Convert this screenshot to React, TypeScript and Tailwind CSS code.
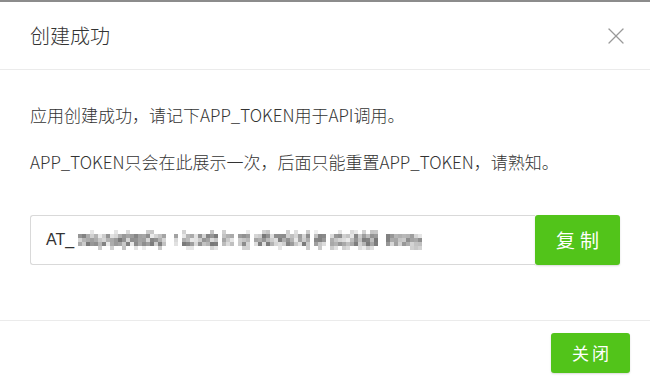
import { X } from 'lucide-react';

// deterministic mosaic for the masked token
function rand(seed: number) {
  let s = seed;
  return () => {
    s = (s * 16807) % 2147483647;
    return s / 2147483647;
  };
}

function Mosaic() {
  const r = rand(42);
  const cols = 87;
  const rows = 5;
  const cells: { x: number; y: number; c: string }[] = [];
  for (let i = 0; i < cols; i++) {
    const gap = r() < 0.12;
    for (let j = 0; j < rows; j++) {
      const edge = j === 0 || j === rows - 1;
      const p = r();
      if (gap || (edge && p < 0.7)) continue;
      const v = edge ? 195 + Math.floor(r() * 45) : 120 + Math.floor(r() * 115);
      cells.push({ x: i * 4, y: j * 4, c: `rgb(${v},${v},${v})` });
    }
  }
  return (
    <svg width={cols * 4} height={rows * 4} className="shrink-0">
      {cells.map((c, k) => (
        <rect key={k} x={c.x} y={c.y} width={4} height={4} fill={c.c} />
      ))}
    </svg>
  );
}

export default function App() {
  return (
    <div className="w-[650px] h-[385px] bg-white border-t-[2px] border-[#8c8c8c] flex flex-col text-[#333] font-['Noto_Sans_CJK_SC','Microsoft_YaHei',sans-serif]">
      <div className="h-[68px] shrink-0 flex items-center justify-between pl-[30px] pr-[20px] border-b border-[#ebebeb]">
        <span className="text-[20px] font-light">创建成功</span>
        <X className="h-[28px] w-[28px] text-[#999]" strokeWidth={1.1} />
      </div>

      <div className="px-[30px] pt-[34px] h-[250px] shrink-0 font-light">
        <p className="text-[17px] leading-[22px]">应用创建成功，请记下APP_TOKEN用于API调用。</p>
        <p className="text-[17px] leading-[22px] mt-[25px]">APP_TOKEN只会在此展示一次，后面只能重置APP_TOKEN，请熟知。</p>
        <div className="mt-[42px] flex items-stretch h-[50px]">
          <div className="flex-1 flex items-center border border-[#d9d9d9] border-r-0 rounded-l-[3px] pl-[15px] text-[16px] font-normal font-['Liberation_Sans',sans-serif] text-[#333]">
            <span>AT_</span>
            <Mosaic />
          </div>
          <button className="w-[85px] bg-[#52c41a] text-white text-[19px] font-normal tracking-[5px] pl-[5px] rounded-[3px] shadow-[0_1px_2px_rgba(0,0,0,0.15)]">
            复制
          </button>
        </div>
      </div>

      <div className="flex-1 border-t border-[#ebebeb] flex justify-end items-start pt-[12px] pr-[20px]">
        <button className="w-[79px] h-[40px] bg-[#52c41a] text-white text-[17px] tracking-[3px] pl-[3px] rounded-[3px] shadow-[0_1px_2px_rgba(0,0,0,0.15)]">
          关闭
        </button>
      </div>
    </div>
  );
}
